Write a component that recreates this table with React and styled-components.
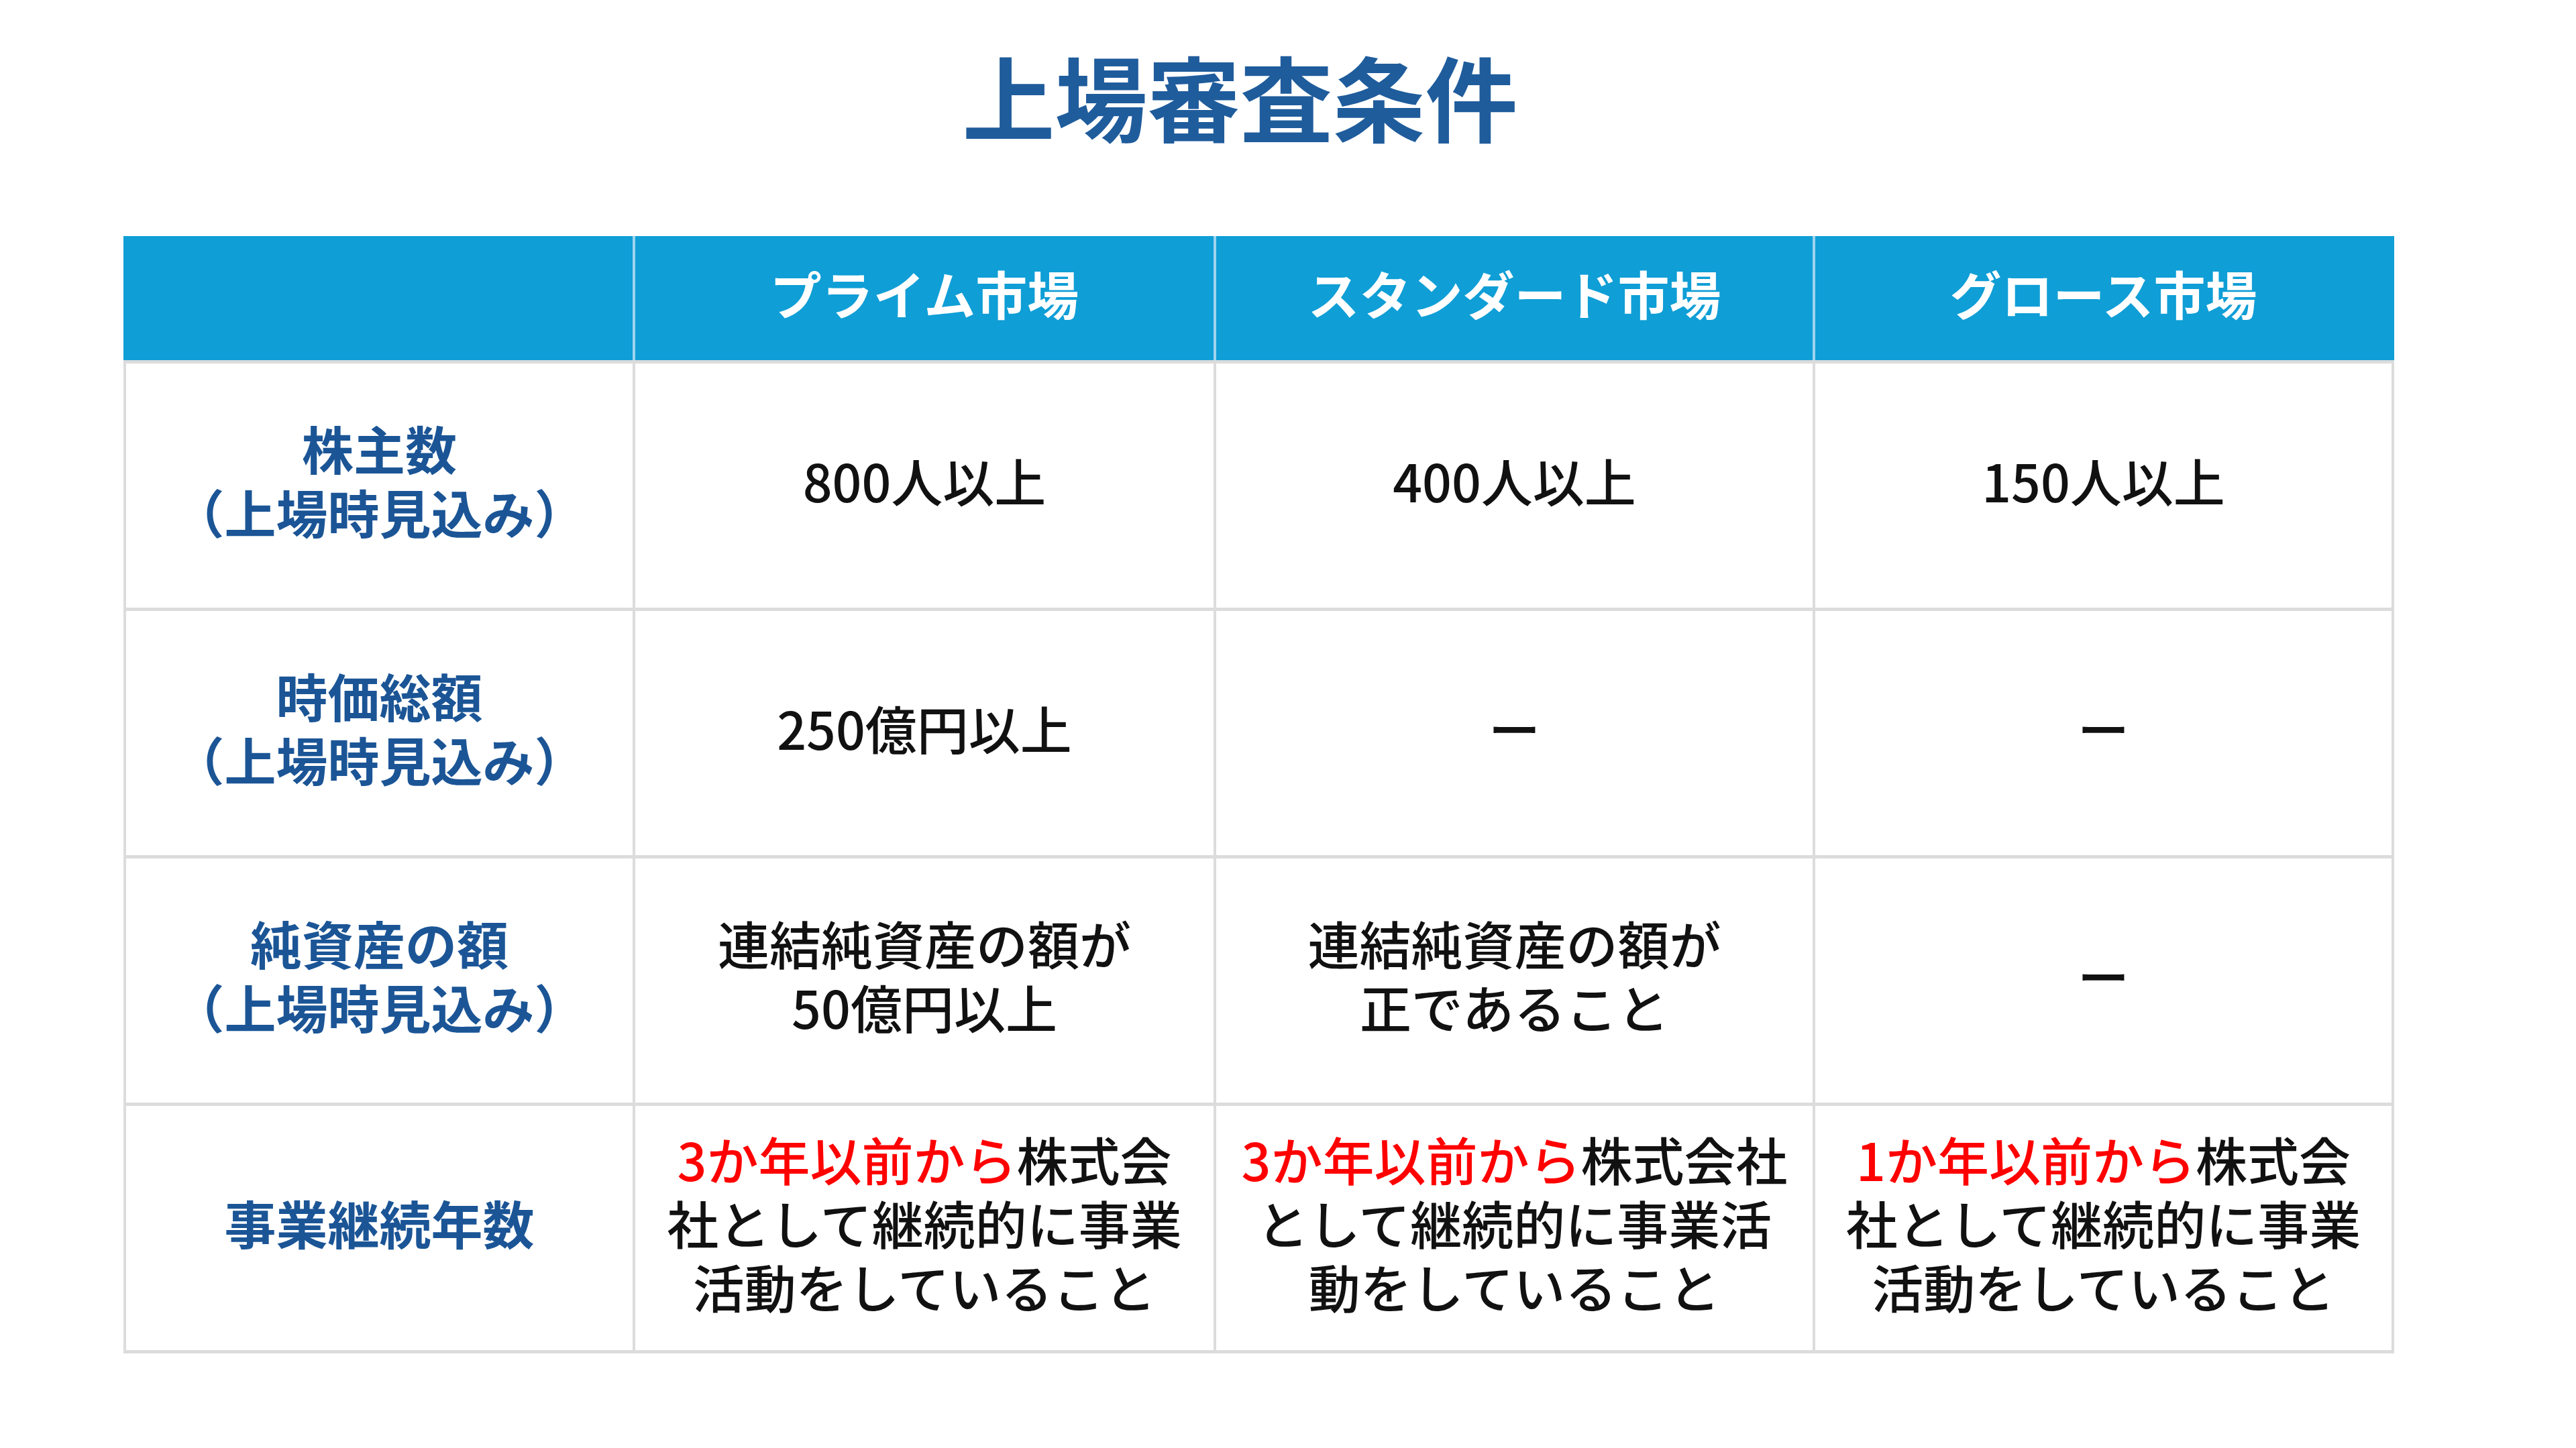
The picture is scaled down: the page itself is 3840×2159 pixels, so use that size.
import styled, { createGlobalStyle } from "styled-components";

const GlobalStyle = createGlobalStyle`
  html, body {
    margin: 0;
    padding: 0;
    background: #fff;
  }
  body {
    font-family: "Noto Sans CJK JP", "Noto Sans", sans-serif;
  }
`;

const Page = styled.div`
  width: 3840px;
  height: 2159px;
  box-sizing: border-box;
  padding: 72px 0 0 184px;
  background: #fff;
`;

const Title = styled.h1`
  width: 3385px;
  margin: 0 0 142px;
  padding-right: 56px;
  box-sizing: border-box;
  text-align: center;
  font-size: 138px;
  line-height: 138px;
  font-weight: 700;
  color: #1f5c9c;
`;

const Table = styled.div`
  display: grid;
  grid-template-columns: 763px 866px 893px 863px;
  grid-template-rows: 185px repeat(4, 369px);
  width: 3385px;
  border-bottom: 5px solid #dcdcdc;
`;

const HeadCell = styled.div`
  display: flex;
  align-items: center;
  justify-content: center;
  box-sizing: border-box;
  padding-bottom: 16px;
  background: #0f9ed6;
  border-left: ${(p) => (p.$first ? "4px solid #0f9ed6" : "none")};
  border-right: 4px solid ${(p) => (p.$last ? "#0f9ed6" : "#9fd4ef")};
  color: #fff;
  font-size: 77px;
  font-weight: 700;
  white-space: nowrap;
`;

const Cell = styled.div`
  display: flex;
  align-items: center;
  justify-content: center;
  box-sizing: border-box;
  border-top: 5px solid #dcdcdc;
  border-right: 4px solid #dcdcdc;
  border-left: ${(p) => (p.$first ? "4px solid #dcdcdc" : "none")};
  padding-bottom: 18px;
  text-align: center;
  font-size: 77px;
  line-height: 95px;
  font-weight: ${(p) => (p.$label ? 700 : 500)};
  color: ${(p) => (p.$label ? "#1b5596" : "#111")};
  white-space: nowrap;
`;

const Red = styled.span`
  color: #ff0000;
`;

const Line = styled.span`
  display: block;
`;

const markets = ["プライム市場", "スタンダード市場", "グロース市場"];

const rows = [
  {
    label: ["株主数", "（上場時見込み）"],
    cells: [["800人以上"], ["400人以上"], ["150人以上"]],
  },
  {
    label: ["時価総額", "（上場時見込み）"],
    cells: [["250億円以上"], ["ー"], ["ー"]],
  },
  {
    label: ["純資産の額", "（上場時見込み）"],
    cells: [
      ["連結純資産の額が", "50億円以上"],
      ["連結純資産の額が", "正であること"],
      ["ー"],
    ],
  },
  {
    label: ["事業継続年数"],
    cells: [
      [<><Red>3か年以前から</Red>株式会</>, "社として継続的に事業", "活動をしていること"],
      [<><Red>3か年以前から</Red>株式会社</>, "として継続的に事業活", "動をしていること"],
      [<><Red>1か年以前から</Red>株式会</>, "社として継続的に事業", "活動をしていること"],
    ],
  },
];

const Lines = ({ lines }) => (
  <div>
    {lines.map((l, i) => (
      <Line key={i}>{l}</Line>
    ))}
  </div>
);

export default function App() {
  return (
    <>
      <GlobalStyle />
      <Page>
        <Title>上場審査条件</Title>
        <Table>
          <HeadCell $first />
          {markets.map((m, i) => (
            <HeadCell key={m} $last={i === markets.length - 1}>
              {m}
            </HeadCell>
          ))}
          {rows.map((r, ri) => [
            <Cell key={"l" + ri} $first $label>
              <Lines lines={r.label} />
            </Cell>,
            ...r.cells.map((c, ci) => (
              <Cell key={ri + "-" + ci}>
                <Lines lines={c} />
              </Cell>
            )),
          ])}
        </Table>
      </Page>
    </>
  );
}
